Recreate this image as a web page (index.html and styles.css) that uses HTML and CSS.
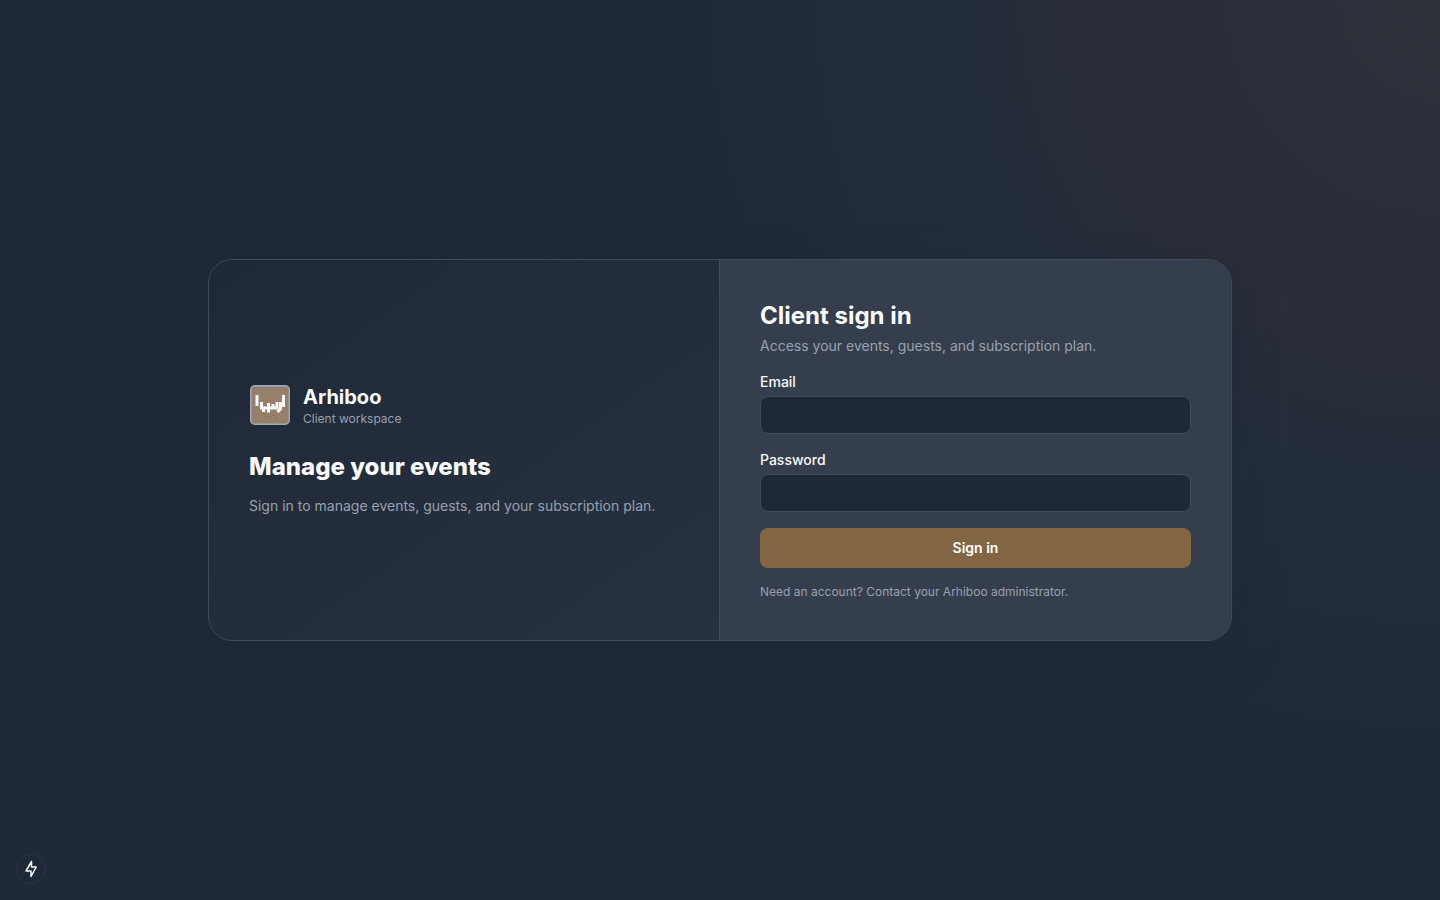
FILE: index.html
```html
<!DOCTYPE html>
<html lang="en">
<head>
    <meta charset="UTF-8">
    <meta name="viewport" content="width=device-width, initial-scale=1.0">
    <title>Arhiboo - Client sign in</title>
    <link rel="stylesheet" href="styles.css">
</head>
<body>

    <main class="page">
        <div class="card">
            <section class="intro">
                <div class="brand">
                    <svg class="logo" viewBox="0 0 42 42" role="img" aria-label="Arhiboo logo">
                        <rect x="1.750" y="1.750" width="38.500" height="38.500" rx="4" fill="#97806a" stroke="#a3a9b8" stroke-width="1.500"/>
                        <g fill="none" stroke="#f8fafc" stroke-width="3">
                            <path d="M8 11v11"/>
                            <path d="M12.500 18v6h3M14.500 23v5"/>
                            <path d="M15 24h4.500v-5M19.500 23v5.500M19 24h9v-6M24 20v4"/>
                            <path d="M31.500 18v7l-3 3"/>
                            <path d="M34.500 11v12"/>
                        </g>
                        <g fill="#705a3d">
                            <rect x="18" y="32" width="1" height="1"/>
                            <rect x="21" y="33" width="1" height="1"/>
                            <rect x="24" y="31" width="1" height="1"/>
                            <rect x="26" y="33" width="1" height="1"/>
                        </g>
                    </svg>
                    <div>
                        <p class="brand-name">Arhiboo</p>
                        <p class="brand-label">Client workspace</p>
                    </div>
                </div>
                <h1 class="intro-title">Manage your events</h1>
                <p class="intro-text">Sign in to manage events, guests, and your subscription plan.</p>
            </section>

            <section class="signin">
                <h2 class="signin-title">Client sign in</h2>
                <p class="signin-text">Access your events, guests, and subscription plan.</p>
                <form class="form">
                    <div class="field">
                        <label for="email">Email</label>
                        <input type="email" id="email" name="email" autocomplete="email">
                    </div>
                    <div class="field">
                        <label for="password">Password</label>
                        <input type="password" id="password" name="password" autocomplete="current-password">
                    </div>
                    <button type="submit" class="submit">Sign in</button>
                </form>
                <p class="note">Need an account? Contact your Arhiboo administrator.</p>
            </section>
        </div>
    </main>

    <button type="button" class="quick" aria-label="Quick actions">
        <svg viewBox="0 0 16 18" width="16" height="18" fill="none" stroke="#f8fafc" stroke-width="1.5" stroke-linejoin="round">
            <path d="M8.500 1.500v5.500h4.700L8 16.500V11H3z"/>
        </svg>
    </button>

</body>
</html>
```
FILE: styles.css
```css
/* General Styling */
* {
    margin: 0;
    padding: 0;
    box-sizing: border-box;
}
body {
    font-family: 'Inter', sans-serif;
    font-size: 14px;
    line-height: 20px;
    color: #f8fafc;
    background: #1f2836;
}
.page {
    min-height: 100vh;
    padding: 16px;
    display: flex;
    align-items: center;
    justify-content: center;
    background: radial-gradient(circle at 100% 0, #2e323b 0, #2b2e38 240px, #2a2e38 340px, #242d3a 480px, #1f2836 760px);
}
/* Card */
.card {
    width: 100%;
    max-width: 1024px;
    display: grid;
    grid-template-columns: 1fr 1fr;
    border: 1px solid #404a59;
    border-radius: 24px;
    overflow: hidden;
    box-shadow: 0 16px 40px rgba(31, 40, 54, 0.8);
}
.intro {
    padding: 40px;
    display: flex;
    flex-direction: column;
    justify-content: center;
    border-right: 1px solid #404a59;
    background: linear-gradient(145deg, #1f2836, #232c3a 40%, #283140);
}
.brand {
    display: flex;
    align-items: center;
    gap: 12px;
    margin-bottom: 24px;
}
.logo {
    width: 42px;
    height: 42px;
}
.brand-name {
    font-size: 20px;
    line-height: 28px;
    font-weight: 700;
}
.brand-label {
    font-size: 12px;
    line-height: 16px;
    color: #98a1b0;
}
.intro-title {
    font-size: 24px;
    line-height: 32px;
    font-weight: 800;
    margin-bottom: 12px;
}
.intro-text {
    line-height: 22px;
    color: #98a1b0;
}
/* Sign in form */
.signin {
    padding: 40px;
    background: #353e4c;
}
.signin-title {
    font-size: 24px;
    line-height: 32px;
    font-weight: 700;
    margin-bottom: 4px;
}
.signin-text {
    color: #98a1b0;
    margin-bottom: 16px;
}
.form {
    display: flex;
    flex-direction: column;
    gap: 16px;
}
.field {
    display: flex;
    flex-direction: column;
    gap: 4px;
}
.field label {
    font-weight: 500;
}
.field input {
    width: 100%;
    height: 38px;
    padding: 8px 12px;
    border: 1px solid #404a59;
    border-radius: 8px;
    outline: none;
    font: inherit;
    color: #f8fafc;
    background: #1f2836;
}
.submit {
    height: 40px;
    border: none;
    border-radius: 8px;
    font: inherit;
    font-weight: 600;
    color: white;
    background: #826644;
    cursor: pointer;
}
.submit:hover {
    background: #92744f;
}
.note {
    margin-top: 16px;
    font-size: 12px;
    line-height: 16px;
    color: #98a1b0;
}
/* Floating button */
.quick {
    position: fixed;
    left: 16px;
    bottom: 16px;
    width: 30px;
    height: 30px;
    display: flex;
    align-items: center;
    justify-content: center;
    border: 1px solid #2b333e;
    border-radius: 50%;
    background: #1f2836;
    cursor: pointer;
}
```
